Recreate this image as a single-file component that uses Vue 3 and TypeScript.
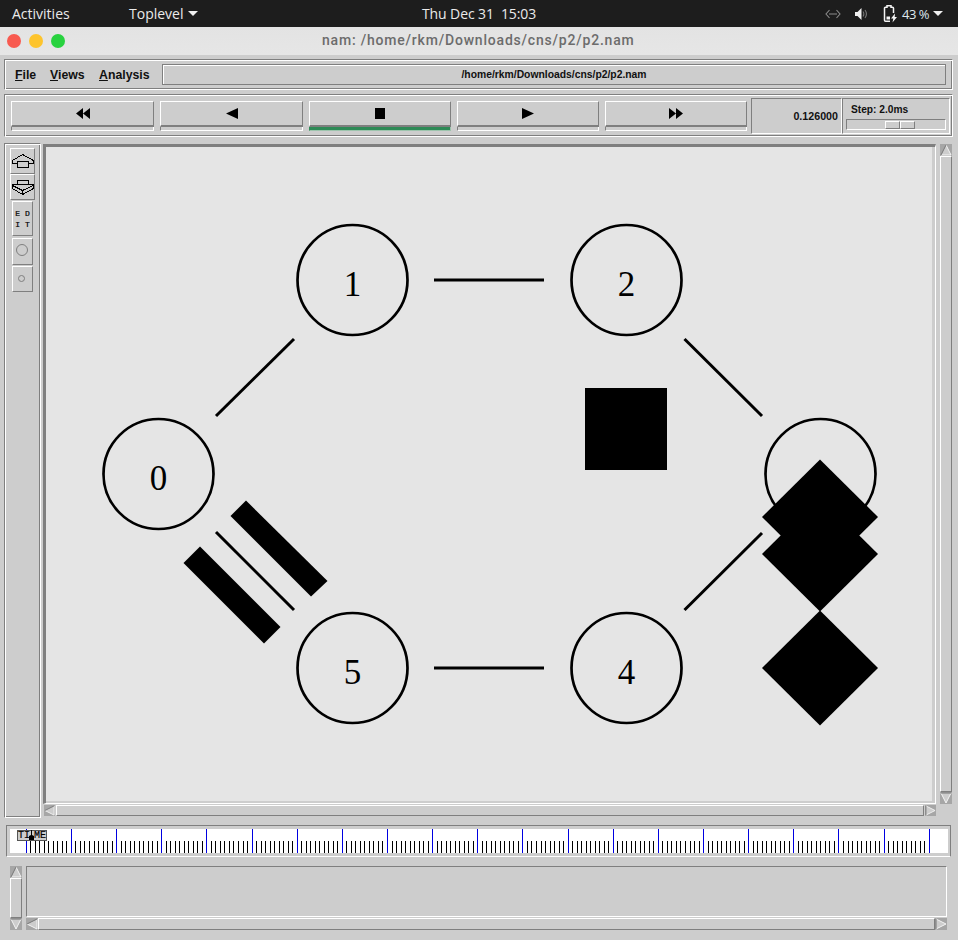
<script setup lang="ts">
const transport = [
  { id: 'rew', active: false },
  { id: 'back', active: false },
  { id: 'stop', active: true },
  { id: 'play', active: false },
  { id: 'ff', active: false },
]
const nodes = [
  { n: '0', x: 158.5, y: 474 },
  { n: '1', x: 352.5, y: 280 },
  { n: '2', x: 626.5, y: 280 },
  { n: '', x: 820.5, y: 474 },
  { n: '4', x: 626.5, y: 668 },
  { n: '5', x: 352.5, y: 668 },
]
const links = [
  [216, 416, 294, 339],
  [434, 280, 544, 280],
  [684.5, 339, 762, 416],
  [684.5, 610, 762, 533],
  [434, 668, 544, 668],
  [216, 532, 294, 610],
]
const diamonds = [517, 554, 668]
const majors = Array.from({ length: 21 }, (_, i) => Math.floor(16.3 + i * 45.15) + 0.5)
const minors: number[] = []
for (let i = 0; i < 20; i++) for (let j = 1; j < 10; j++) minors.push(Math.floor(16.3 + i * 45.15 + j * 4.515) + 0.5)

const arrowShapes = {
  up: { fill: '6,1 11,11 1,11', dark: 'M6 1 1 11', light: 'M6 1 11 11H1' },
  down: { fill: '1,1 11,1 6,11', dark: 'M1 1H11', light: 'M1 1 6 11 11 1' },
  left: { fill: '1,6 11,1 11,11', dark: 'M1 6 11 1', light: 'M1 6 11 11V1' },
  right: { fill: '1,1 11,6 1,11', dark: 'M1 1V11', light: 'M1 1 11 6 1 11' },
}
const vArrows = { first: arrowShapes.up, last: arrowShapes.down }
const hArrows = { first: arrowShapes.left, last: arrowShapes.right }
</script>

<template>
  <div class="screen">
    <header class="topbar">
      <div class="top-left">
        <span class="activities">Activities</span>
        <span class="toplevel">Toplevel<i class="caret"></i></span>
      </div>
      <span class="clock">Thu Dec 31&nbsp;&nbsp;15:03</span>
      <div class="tray">
        <svg class="net" width="16" height="10" viewBox="0 0 16 10" fill="none" stroke="#8c8c8c" stroke-width="1.1">
          <path d="M4.500 1 1 5l3.500 4M11.500 1 15 5l-3.500 4M4 5h8" />
        </svg>
        <svg class="vol" width="12" height="12" viewBox="0 0 12 12">
          <path d="M0 4h2.500L6.500 0v12l-4-4H0z" fill="#f0f0f0" />
          <path d="M8 3.500c1 1.500 1 3.500 0 5M10 2c1.800 2.500 1.800 5.500 0 8" fill="none" stroke="#777" stroke-width="1.100" />
        </svg>
        <svg class="batt" width="14" height="18" viewBox="0 0 14 18" fill="none">
          <path d="M7 16.200H2.500a1 1 0 0 1-1-1V3.200a1 1 0 0 1 1-1h1.500V.8h4v1.400h1.500a1 1 0 0 1 1 1V8" stroke="#f4f4f4" stroke-width="1.500" />
          <rect x="3.500" y="11.500" width="3.500" height="3" fill="#f4f4f4" />
          <path d="M12 8.500 8 13.500h2.300l-.8 4 4.500-5.500h-2.300z" fill="#f4f4f4" />
        </svg>
        <span class="pct">43 %</span>
        <i class="caret"></i>
      </div>
    </header>

    <div class="titlebar">
      <span class="dot red"></span><span class="dot yellow"></span><span class="dot green"></span>
      <span class="title">nam: /home/rkm/Downloads/cns/p2/p2.nam</span>
    </div>

    <section class="menu groove">
      <span class="mitem m1"><u>F</u>ile</span>
      <span class="mitem m2"><u>V</u>iews</span>
      <span class="mitem m3"><u>A</u>nalysis</span>
      <div class="pathfield">/home/rkm/Downloads/cns/p2/p2.nam</div>
    </section>

    <section class="controls groove">
      <div class="transport">
        <div v-for="b in transport" :key="b.id" class="tbtn">
          <div class="tface">
            <svg width="20" height="11" viewBox="0 0 20 11" fill="#000">
              <path v-if="b.id === 'rew'" d="M3 5.500 10 0v11zM10 5.500 17 0v11z" />
              <path v-else-if="b.id === 'back'" d="M4 5.500 16 0v11z" />
              <rect v-else-if="b.id === 'stop'" x="5" y="0" width="10" height="11" />
              <path v-else-if="b.id === 'play'" d="M4 0l12 5.500L4 11z" />
              <path v-else d="M3 0l7 5.500L3 11zM10 0l7 5.500-7 5.500z" />
            </svg>
          </div>
          <div class="tstrip" :class="{ on: b.active }"></div>
        </div>
      </div>
      <div class="timebox sunken">0.126000</div>
      <div class="stepbox sunken">
        <span class="steplabel">Step: 2.0ms</span>
        <div class="trough">
          <div class="thumb"><span></span><span></span></div>
        </div>
      </div>
    </section>

    <section class="middle">
      <aside class="tools groove">
        <div class="tool big">
          <svg class="crisp" width="23" height="24" viewBox="11 149 23 24" fill="none" stroke="#000" stroke-width="1">
            <path d="M22.500 154.500 12.500 160.500v3h5v4h11v-4h5v-3zM17.500 163.500v-2h11v2" />
          </svg>
        </div>
        <div class="tool big">
          <svg class="crisp" width="23" height="24" viewBox="11 175 23 24" fill="none" stroke="#000" stroke-width="1">
            <path d="M17.500 180.500h11v4h-11zM17.500 184.500h-5v4l10 6 11-6v-4h-5M12.500 185.500l10 5 11-5M22.500 190.500v4" />
          </svg>
        </div>
        <div class="tool edit"><span>E D</span><span>I T</span></div>
        <div class="tool shape"><i class="ring large"></i></div>
        <div class="tool shape small"><i class="ring"></i></div>
      </aside>

      <div class="canvas-col">
        <div class="canvas-frame">
          <div class="canvas">
            <svg class="diagram" width="886" height="654" viewBox="46 147 886 654">
              <g v-for="n in nodes" :key="n.x + '-' + n.y">
                <circle :cx="n.x" :cy="n.y" r="55" fill="none" stroke="#000" stroke-width="2.700" />
                <text :x="n.x" :y="n.y + 16" class="nlabel" text-anchor="middle">{{ n.n }}</text>
              </g>
              <line v-for="(l, i) in links" :key="i" :x1="l[0]" :y1="l[1]" :x2="l[2]" :y2="l[3]" stroke="#000" stroke-width="3" />
              <rect x="585" y="388" width="82" height="82" fill="#000" />
              <polygon points="246,500.5 327.5,581 311,596.5 230.5,516" fill="#000" />
              <polygon points="200,546.5 280.500,627 264,643.5 183.5,563" fill="#000" />
              <polygon v-for="d in diamonds" :key="d" :points="`820,${d - 57.5} 878,${d} 820,${d + 57.5} 762,${d}`" fill="#000" />
            </svg>
          </div>
        </div>
        <div class="hscroll">
          <svg class="arrow h" viewBox="0 0 12 12" preserveAspectRatio="none"><polygon :points="hArrows.first.fill" fill="#cdcdcd" /><path :d="hArrows.first.light" fill="none" stroke="#f4f4f4" /><path :d="hArrows.first.dark" fill="none" stroke="#777" /></svg>
          <span class="sthumb"></span>
          <svg class="arrow h" viewBox="0 0 12 12" preserveAspectRatio="none"><polygon :points="hArrows.last.fill" fill="#cdcdcd" /><path :d="hArrows.last.light" fill="none" stroke="#f4f4f4" /><path :d="hArrows.last.dark" fill="none" stroke="#777" /></svg>
        </div>
      </div>

      <div class="vscroll">
        <svg class="arrow" viewBox="0 0 12 12"><polygon :points="vArrows.first.fill" fill="#cdcdcd" /><path :d="vArrows.first.light" fill="none" stroke="#f4f4f4" /><path :d="vArrows.first.dark" fill="none" stroke="#777" /></svg>
        <span class="sthumb"></span>
        <svg class="arrow" viewBox="0 0 12 12"><polygon :points="vArrows.last.fill" fill="#cdcdcd" /><path :d="vArrows.last.light" fill="none" stroke="#f4f4f4" /><path :d="vArrows.last.dark" fill="none" stroke="#777" /></svg>
      </div>
    </section>

    <section class="timeline">
      <div class="ruler">
        <svg class="ticks" width="938" height="24" viewBox="0 0 938 24">
          <line v-for="m in minors" :key="m" :x1="m" y1="12" :x2="m" y2="24" stroke="#000" stroke-width="1" />
          <line v-for="m in majors" :key="m" :x1="m" y1="0" :x2="m" y2="24" stroke="#0000e0" stroke-width="1" />
        </svg>
        <div class="timelabel">
          <span>TI</span><span>ME</span>
          <svg class="marker" width="7" height="10" viewBox="0 0 7 10"><path d="M3 0h1v5l2 1v4H1V6l2-1z" fill="#000" /></svg>
        </div>
      </div>
    </section>

    <section class="bottom">
      <div class="vscroll small-v">
        <svg class="arrow" viewBox="0 0 12 12"><polygon :points="vArrows.first.fill" fill="#cdcdcd" /><path :d="vArrows.first.light" fill="none" stroke="#f4f4f4" /><path :d="vArrows.first.dark" fill="none" stroke="#777" /></svg>
        <span class="sthumb"></span>
        <svg class="arrow" viewBox="0 0 12 12"><polygon :points="vArrows.last.fill" fill="#cdcdcd" /><path :d="vArrows.last.light" fill="none" stroke="#f4f4f4" /><path :d="vArrows.last.dark" fill="none" stroke="#777" /></svg>
      </div>
      <div class="log-col">
        <div class="log"></div>
        <div class="hscroll">
          <svg class="arrow h" viewBox="0 0 12 12" preserveAspectRatio="none"><polygon :points="hArrows.first.fill" fill="#cdcdcd" /><path :d="hArrows.first.light" fill="none" stroke="#f4f4f4" /><path :d="hArrows.first.dark" fill="none" stroke="#777" /></svg>
          <span class="sthumb"></span>
          <svg class="arrow h" viewBox="0 0 12 12" preserveAspectRatio="none"><polygon :points="hArrows.last.fill" fill="#cdcdcd" /><path :d="hArrows.last.light" fill="none" stroke="#f4f4f4" /><path :d="hArrows.last.dark" fill="none" stroke="#777" /></svg>
        </div>
      </div>
    </section>
  </div>
</template>

<style>
html, body { margin: 0; padding: 0; background: #cdcdcd; }
</style>

<style scoped>
.screen {
  width: 958px;
  height: 940px;
  overflow: hidden;
  display: flex;
  flex-direction: column;
  background: #cdcdcd;
  font-family: "Liberation Sans", sans-serif;
  color: #000;
}

/* GNOME top bar */
.topbar {
  height: 27px;
  flex: none;
  background: #1d1d1d;
  color: #eaeaea;
  position: relative;
  display: flex;
  align-items: center;
  justify-content: space-between;
  font-family: "Open Sans", "Noto Sans", sans-serif;
  font-size: 14px;
}
.top-left { display: flex; padding-left: 12px; }
.activities { width: 117px; }
.toplevel { display: flex; align-items: center; gap: 5px; }
.caret {
  display: inline-block;
  flex: none;
  width: 0;
  height: 0;
  border-left: 5px solid transparent;
  border-right: 5px solid transparent;
  border-top: 5px solid #f0f0f0;
}
.clock {
  position: absolute;
  left: 422px;
  top: 4px;
  font-size: 14px;
  letter-spacing: -0.1px;
}
.tray { display: flex; align-items: center; padding-right: 15px; }
.net { margin-right: 14px; }
.vol { margin-right: 16px; }
.batt { margin-right: 5px; }
.pct { width: 26px; margin-right: 5px; font-size: 13px; color: #dfe8ee; letter-spacing: -0.5px; white-space: nowrap; }

/* Window title */
.titlebar {
  height: 28px;
  flex: none;
  background: linear-gradient(#e3e3e3, #e6e6e6);
  position: relative;
  display: flex;
  align-items: center;
  padding-left: 7px;
  gap: 8px;
}
.dot { width: 14px; height: 14px; border-radius: 50%; }
.red { background: #f85a50; }
.yellow { background: #fdc42d; }
.green { background: #28d23f; }
.title {
  position: absolute;
  left: 322px;
  top: 5px;
  font-family: Roboto, "Liberation Sans", sans-serif;
  font-size: 14px;
  font-weight: 500;
  letter-spacing: 0.8px;
  color: #6c6c6c;
  white-space: nowrap;
}

/* Reliefs */
.groove {
  box-sizing: border-box;
  border: 1px solid;
  border-color: #7f7f7f #fff #fff #7f7f7f;
  box-shadow: inset 1px 1px 0 #fff, inset -1px -1px 0 #7f7f7f;
}
.sunken {
  box-sizing: border-box;
  border: 1px solid;
  border-color: #7f7f7f #fff #fff #7f7f7f;
}

/* Menu */
.menu {
  height: 31px;
  flex: none;
  margin: 4px 5px 0 4px;
  display: flex;
  align-items: center;
  font-size: 12.3px;
  font-weight: 700;
  color: #111;
  padding-left: 10px;
}
.mitem { white-space: nowrap; }
.m1 { width: 35px; }
.m2 { width: 49px; }
.m3 { width: 63px; }
.pathfield {
  box-sizing: border-box;
  width: 784px;
  height: 21px;
  border: 1px solid #7f7f7f;
  box-shadow: inset 1px 1px 0 #fff;
  font-size: 10.35px;
  line-height: 19px;
  text-align: center;
}

/* Transport */
.controls {
  height: 43px;
  flex: none;
  margin: 4px 5px 0 4px;
  display: flex;
  align-items: center;
  padding-left: 6px;
}
.transport { display: flex; gap: 6px; width: 737px; flex: none; }
.tbtn { width: 143px; height: 30px; display: flex; flex-direction: column; }
.tbtn:nth-child(n+3) { width: 142px; }
.tface {
  box-sizing: border-box;
  height: 26px;
  border: 1px solid;
  border-width: 1px 1px 2px 1px;
  border-color: #fff #7f7f7f #7f7f7f #fff;
  display: flex;
  align-items: center;
  justify-content: center;
  padding-top: 1px;
}
.tstrip {
  box-sizing: border-box;
  height: 4px;
  border: 1px solid;
  border-top: 0;
  border-color: #7f7f7f #fff #fff #7f7f7f;
}
.tstrip.on { background: #2e8b57; border-color: #2e8b57 #9dc4ad #9dc4ad #2e8b57; }
.timebox {
  width: 91px;
  height: 36px;
  margin-left: 3px;
  font-size: 10.7px;
  font-weight: 700;
  color: #111;
  text-align: right;
  line-height: 34px;
  padding-right: 3px;
}
.stepbox {
  width: 108px;
  height: 36px;
  position: relative;
  display: flex;
  flex-direction: column;
}
.steplabel {
  font-size: 10.2px;
  font-weight: 700;
  color: #111;
  padding: 5px 0 0 8px;
  line-height: 12px;
}
.trough {
  box-sizing: border-box;
  position: relative;
  width: 100px;
  height: 11px;
  margin: 3px 0 0 3px;
  border: 1px solid;
  border-color: #7f7f7f #fff #fff #7f7f7f;
}
.thumb {
  position: absolute;
  left: 38px;
  top: 1px;
  display: flex;
}
.thumb span {
  box-sizing: border-box;
  width: 15px;
  height: 8px;
  border: 1px solid;
  border-color: #fff #7f7f7f #7f7f7f #fff;
}

/* Middle */
.middle {
  height: 675px;
  flex: none;
  margin-top: 6px;
  display: flex;
  padding-left: 4px;
}
.tools {
  width: 37px;
  height: 675px;
  display: flex;
  flex-direction: column;
  align-items: center;
  padding-top: 4px;
  flex: none;
}
.tool {
  box-sizing: border-box;
  border: 1px solid;
  border-color: #fff #7f7f7f #7f7f7f #fff;
  display: flex;
  align-items: center;
  justify-content: center;
}
.crisp { shape-rendering: crispEdges; display: block; }
.big { width: 25px; height: 26px; }
.edit {
  width: 21px;
  height: 35px;
  margin-top: 1px;
  flex-direction: column;
  font-size: 8px;
  font-weight: 400;
  line-height: 11px;
  font-family: "Liberation Mono", monospace;
  -webkit-text-stroke: 0.2px #000;
  white-space: pre;
}
.shape { width: 21px; height: 27px; margin-top: 2px; }
.shape.small { margin-top: 1px; height: 26px; }
.ring {
  display: block;
  box-sizing: border-box;
  width: 7px;
  height: 7px;
  margin: 0 2px 2px 0;
  border: 1px solid #7f7f7f;
  border-radius: 50%;
}
.ring.large { width: 12px; height: 12px; margin-bottom: 3px; }

.canvas-col { width: 893px; margin-left: 2px; margin-top: 1px; flex: none; }
.canvas-frame {
  box-sizing: border-box;
  width: 893px;
  height: 660px;
  border-style: solid;
  border-width: 3px 1px 1px 3px;
  border-color: #7f7f7f #fff #fff #7f7f7f;
  padding: 0 3px 2px 0;
}
.canvas { width: 886px; height: 654px; background: #e5e5e5; position: relative; }
.diagram { position: absolute; left: 0; top: 0; display: block; }
.nlabel { font-family: "Liberation Serif", serif; font-size: 35px; fill: #000; }

/* Scrollbars */
.hscroll { display: flex; height: 11px; margin-top: 1px; padding-left: 1px; gap: 1px; box-sizing: border-box; }
.log-col .hscroll { height: 12px; padding-left: 0; gap: 0; }
.vscroll { display: flex; flex-direction: column; width: 12px; margin-left: 4px; margin-top: 1px; height: 660px; flex: none; }
.sthumb {
  flex: 1;
  box-sizing: border-box;
  border: 1px solid;
  border-color: #fff #7f7f7f #7f7f7f #fff;
  display: block;
}
.arrow {
  flex: none;
  width: 12px;
  height: 12px;
  display: block;
  background: #a6a6a6;
}
.arrow.h { width: 11px; height: 100%; }
.log-col .arrow.h { width: 12px; }

/* Timeline */
.timeline {
  box-sizing: border-box;
  height: 32px;
  width: 945px;
  flex: none;
  margin: 7px 0 0 6px;
  border: 1px solid;
  border-color: #7f7f7f #7f7f7f #fff #7f7f7f;
  padding: 3px;
}
.ruler { position: relative; width: 938px; height: 24px; background: #fff; }
.ticks { position: absolute; left: 0; top: 0; display: block; }
.timelabel {
  position: absolute;
  left: 7px;
  top: 1px;
  box-sizing: border-box;
  width: 30px;
  height: 11px;
  background: #cdcdcd;
  border: 1px solid #555;
  font-family: "Liberation Mono", monospace;
  font-size: 10px;
  font-weight: 400;
  -webkit-text-stroke: 0.2px #000;
  line-height: 9px;
  display: flex;
  justify-content: space-between;
}
.marker { position: absolute; left: 10px; top: -1px; }

/* Bottom */
.bottom { display: flex; flex: none; margin-top: 9px; padding-left: 10px; height: 64px; }
.small-v { margin: 0; height: 64px; }
.log-col { margin-left: 4px; width: 921px; display: flex; flex-direction: column; }
.log {
  box-sizing: border-box;
  height: 51px;
  border: 1px solid;
  border-color: #7f7f7f #fff #fff #7f7f7f;
}
</style>
